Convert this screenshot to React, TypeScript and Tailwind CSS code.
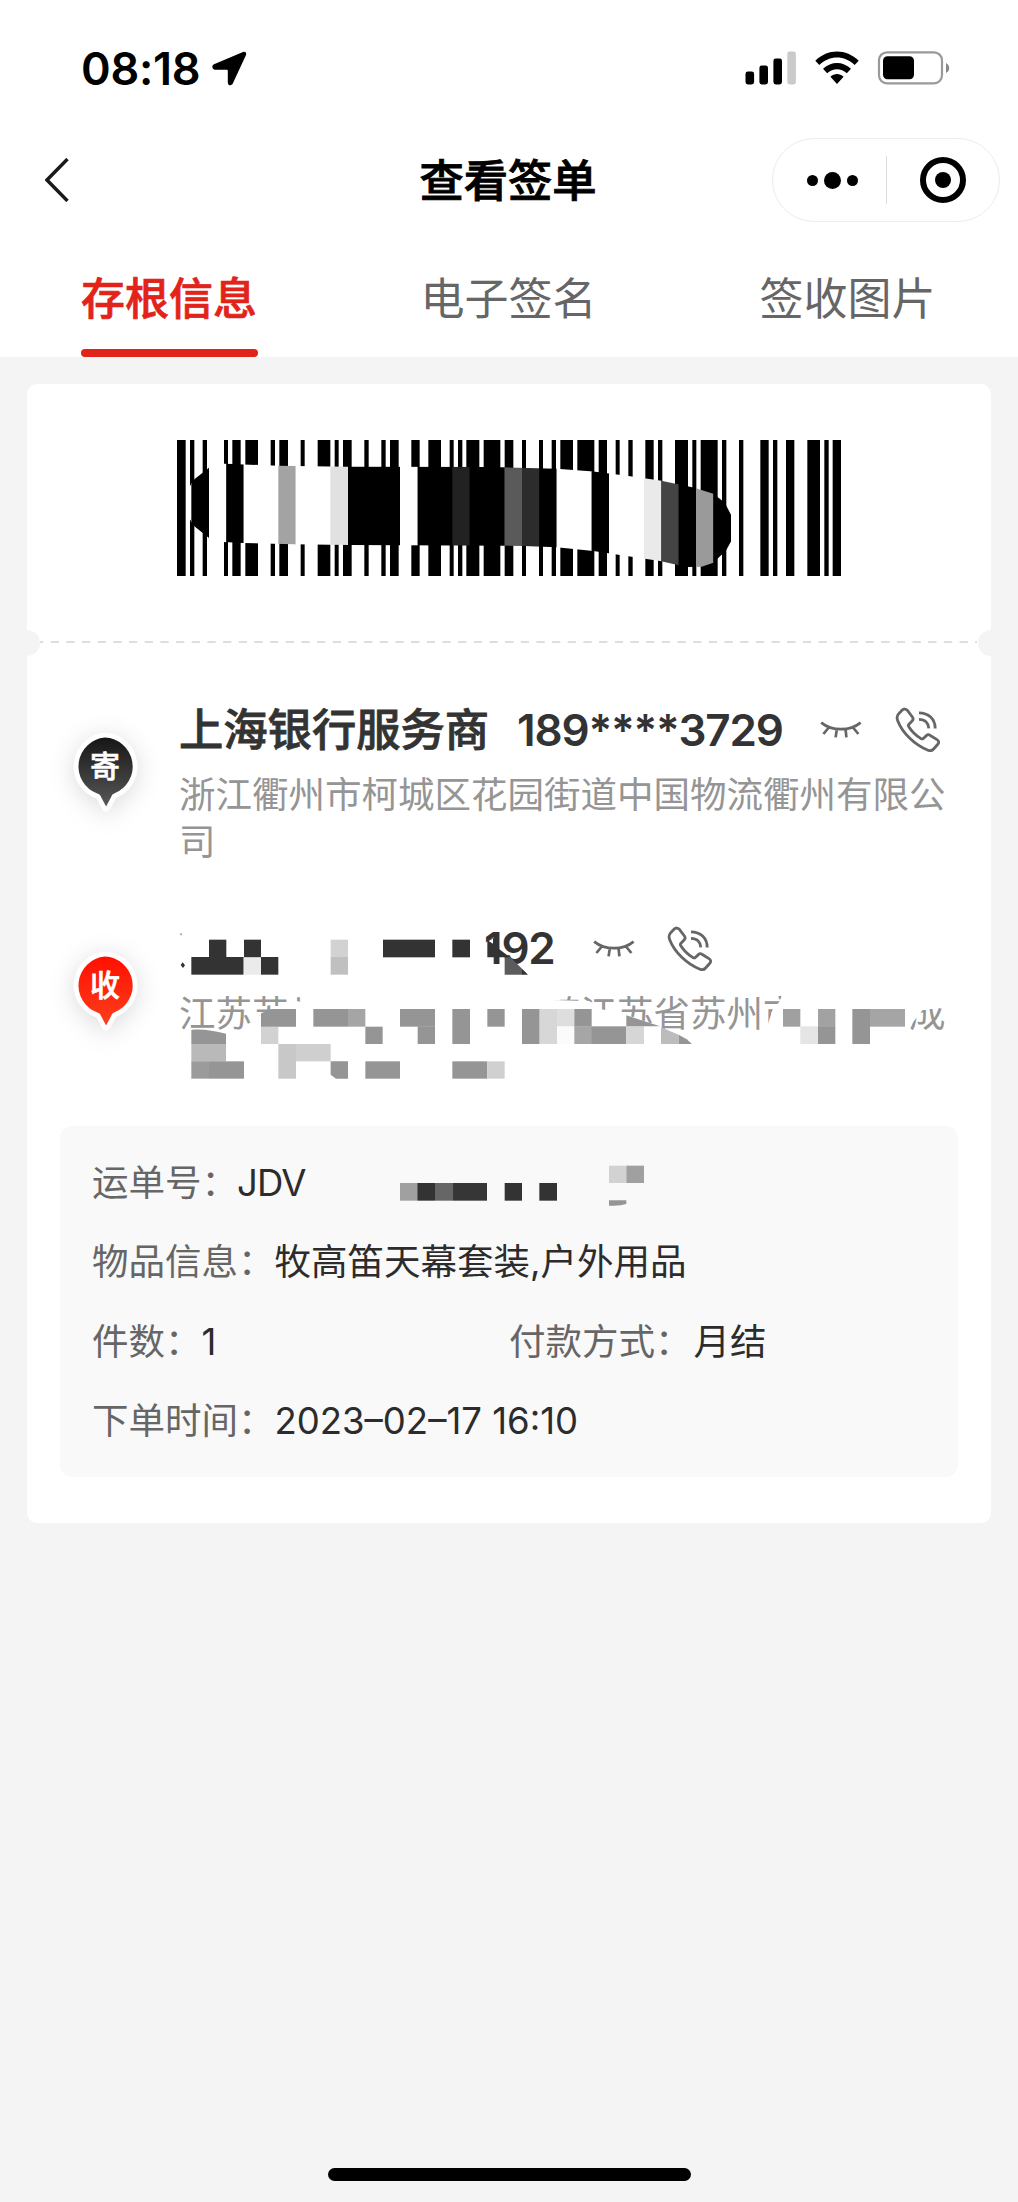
import type { ReactNode } from "react";

type Box = [number, number, number, number, string];

// Bars of the barcode as [start, end], in thirds of a pixel.
const BARS: [number, number][] = [
  [51, 77], [90, 103], [128, 141], [192, 204], [217, 242], [256, 294], [332, 345], [358, 384],
  [422, 434], [473, 511], [524, 536], [549, 575], [613, 626], [664, 677], [690, 716], [754, 779],
  [805, 843], [869, 881], [894, 907], [919, 958], [971, 1021], [1034, 1060], [1086, 1098],
  [1137, 1149], [1175, 1188], [1201, 1239], [1252, 1303], [1316, 1341], [1367, 1379], [1405, 1418],
  [1456, 1481], [1494, 1507], [1545, 1584], [1597, 1609], [1622, 1673], [1686, 1699], [1737, 1750],
  [1801, 1826], [1839, 1852], [1878, 1903], [1942, 1980], [1993, 2006], [2018, 2043],
];

const BLOCKS: [number, number, string][] = [
  [80, 147, "#000"], [147, 199, "#fff"], [199, 251, "#000"], [251, 355, "#fff"], [355, 407, "#a3a3a3"],
  [407, 512, "#fff"], [512, 564, "#e1e1e1"], [564, 720, "#000"], [720, 773, "#fff"], [773, 877, "#000"],
  [877, 929, "#222"], [929, 1034, "#000"], [1034, 1086, "#5a5a5a"], [1086, 1138, "#2c2c2c"],
  [1138, 1190, "#000"], [1190, 1295, "#fff"], [1295, 1347, "#000"], [1347, 1452, "#fff"],
  [1452, 1504, "#eaeaea"], [1504, 1556, "#444"], [1556, 1608, "#000"], [1608, 1660, "#9a9a9a"],
  [1660, 1713, "#000"],
];

function Barcode() {
  return (
    <svg width="664" height="136" viewBox="51 61 1992 407" preserveAspectRatio="none">
      <defs>
        <clipPath id="stroke">
          <path d="M88 202 L104 178 L147 144 L190 131 L250 134 L355 138 L560 141 L1000 142 L1190 147 L1300 155 L1400 168 L1500 182 L1600 203 L1660 222 L1685 241 L1698 256 L1713 285 V365 L1698 392 L1660 428 L1625 440 L1580 441 L1500 423 L1400 408 L1300 393 L1190 382 L1090 378 L570 375 L400 373 L250 369 L190 366 L147 354 L104 320 L88 296 Z" />
        </clipPath>
      </defs>
      {BARS.map(([a, b]) => (
        <rect key={a} x={a} y={61} width={b - a} height={407} />
      ))}
      <g clipPath="url(#stroke)">
        <rect x="80" y="100" width="16" height="360" fill="#fff" />
        {BLOCKS.map(([a, b, c]) => (
          <rect key={a} x={Math.max(a, 94)} y={100} width={b - Math.max(a, 94) + 0.5} height={360} fill={c} />
        ))}
      </g>
    </svg>
  );
}

function Eye() {
  return (
    <svg width="42" height="18" viewBox="0 0 42 18" fill="none" stroke="#666" strokeWidth="2.7">
      <path d="M1.2 1.6C12 10.4 30 10.4 40.6 1.6M8.4 7L3.4 13M16.8 8.6L15.6 16.4M25.6 8.6L26.4 16.4M33.4 7L38.4 13" />
    </svg>
  );
}

function Phone() {
  return (
    <svg width="46" height="46" viewBox="0 0 46 46" fill="none" stroke="#666" strokeWidth="2.8" strokeLinejoin="round">
      <path d="M7 3.2C8.6 1.6 11 1.6 12.4 3.4L17.4 10C18.4 11.4 18.3 12.8 17.1 14L14 17.2C13.2 18 13.2 18.8 13.8 19.8C17 25 21.2 28.8 26 31.6C27 32.2 27.8 32 28.6 31.2L31.4 28.6C32.4 27.6 33.7 27.4 34.9 28.2L42 32.6C43.9 33.8 44.2 35.6 42.8 37.3L38.6 42C37.2 43.7 35.2 44.1 33 43.2C20 38 7.6 26.4 2.6 13.4C1.8 11.2 2 8.8 3.4 7.2Z" />
      <path d="M24 5.8C33.4 5.8 40.2 12 40.2 21.4M24 12.4C29.8 12.4 33.4 16 33.8 21.4" />
    </svg>
  );
}

function Pin({ id, from, to, children }: { id: string; from: string; to: string; children: ReactNode }) {
  return (
    <div className="relative h-[80px] w-[68px]">
      <svg className="overflow-visible drop-shadow-[0_4px_12px_rgba(0,0,0,0.14)]" width="68" height="80" viewBox="0 0 68 80">
        <defs>
          <linearGradient id={id} x1="0" y1="0" x2="0" y2="1">
            <stop offset="0" stopColor={from} />
            <stop offset="1" stopColor={to} />
          </linearGradient>
        </defs>
        <path
          d="M33.8 5.5A29 29 0 0 1 43.2 61.5C41.7 62 41.2 62.8 40.4 64.4L35.1 74.6L29.8 64.4C29 62.8 28.2 62 26.2 61.5A29 29 0 0 1 33.8 5.5Z"
          fill={`url(#${id})`}
          stroke="#fff"
          strokeWidth="9.6"
          strokeLinejoin="round"
          paintOrder="stroke"
        />
      </svg>
      <span className="absolute left-0 top-[13px] w-[68px] text-center text-[30px] font-medium leading-[42px] text-white [-webkit-text-stroke:0.6px_white]">
        {children}
      </span>
    </div>
  );
}

const G = "#959595";
const D = "#333";
// Masking blocks over the receiver, in thirds of a pixel: x, y, width, height, colour.
const MASK: Box[] = [
  [627, 149, 52, 53, D], [732, 149, 51, 53, D], [574, 201, 157, 53, D], [783, 201, 52, 53, D],
  [731, 203, 52, 51, "#ebebeb"], [992, 149, 52, 53, "#d2d2d2"], [992, 201, 52, 53, "#c0c0c0"],
  [1149, 149, 156, 53, D], [1357, 149, 53, 53, D],
  [940, 357, 105, 53, G], [1044, 357, 52, 53, "#a5a5a5"], [783, 410, 52, 52, "#d2d2d2"],
  [1096, 410, 52, 52, G], [1200, 357, 105, 53, G], [1253, 409, 52, 53, G], [1357, 357, 53, 105, G],
  [1462, 357, 52, 53, G], [574, 462, 104, 53, "#b9b9b9"], [574, 514, 53, 52, "#9b9b9b"], [627, 514, 105, 52, G],
  [835, 462, 53, 104, "#c8c8c8"], [888, 462, 104, 52, "#cfcfcf"], [1096, 514, 104, 52, G],
  [1357, 514, 105, 52, G], [1462, 514, 52, 52, "#d0d0d0"],
  [1566, 357, 53, 105, G], [1619, 357, 52, 105, "#d7d7d7"], [1671, 357, 52, 53, "#dedede"],
  [1671, 409, 52, 53, "#fbfbfb"], [1723, 357, 52, 53, G], [1723, 409, 53, 53, "#a6a6a6"],
  [1775, 409, 104, 53, G], [1879, 409, 53, 53, "#d6d6d6"],
  [2349, 357, 52, 53, "#a0a0a0"], [2401, 409, 53, 53, "#e5e5e5"], [2454, 357, 52, 53, "#a2a2a2"],
  [2454, 409, 52, 53, G], [2557, 357, 53, 105, G], [2610, 357, 105, 53, "#a5a5a5"],
];

function ReceiverMask() {
  return (
    <svg className="absolute left-0 top-0" width="800" height="180" viewBox="516 90 2400 540">
      <path fill="#fff" d="M735 430L762 392L785 372L830 355L862 340L890 333L902 336L920 325L960 316V308H1660V330L1750 333L1768 333L1800 357L1866 370L1900 382L1975 408L1990 417L2060 425V460H735Z" />
      <path fill="#fff" d="M2300 425L2303 405L2320 352L2336 338L2350 308H2840V352L2768 360L2738 398L2724 425Z" />
      {MASK.map(([x, y, w, h, c]) => (
        <rect key={`${x}-${y}`} x={x} y={y} width={w} height={h} fill={c} />
      ))}
      <path fill={G} d="M783 410V370L815 357H888V410ZM574 462V420C606 416 640 423 678 431V462ZM992 514H1044V566H1008L992 554Z" />
      <path fill={G} d="M1879 376L1980 409H1879Z" />
      <path fill="#bcbcbc" d="M1983 412L2036 434V462H1983Z" />
      <path fill={G} d="M2036 434L2060 448L2076 462H2036Z" />
      <path fill={D} d="M1462 152L1490 140V172L1530 202H1462ZM542 225L548 217L555 226L549 234ZM541 132L544 128V137Z" />
      <path fill="#fff" d="M1466 153L1479 146V161Z" />
      <path fill="#5c5c5c" d="M1514 203L1530 201L1566 236V254H1514Z" />
      <path fill={D} d="M1566 236L1584 254H1566Z" />
    </svg>
  );
}

function Row({ label, children }: { label: string; children: ReactNode }) {
  return (
    <div className="flex h-[79.2px] items-center whitespace-nowrap">
      <span className="text-[#666]">{label}：</span>
      <span className="text-[#2c2c2c]">{children}</span>
    </div>
  );
}

export default function App() {
  return (
    <div className="flex h-[2202px] w-[1018px] flex-col overflow-hidden bg-[#f4f4f4] font-['Inter','Noto_Sans_CJK_SC',sans-serif]">
      <header className="h-[357px] bg-white">
        <div className="flex h-[136px] items-center pl-[81px] pr-[68px]">
          <span className="text-[45px] font-semibold leading-none tracking-[-0.3px] text-black">08:18</span>
          <svg className="ml-[12px]" width="35" height="35" viewBox="0 0 35 35">
            <path d="M31 1L2 13.2C-.6 14.4 0 18.6 3 18.8H14.6C15.4 18.8 15.8 19.2 15.8 20V31.4C16 34.8 19.4 35.2 20.8 32.6L34 4C34.8 2 33.2 .2 31 1Z" />
          </svg>
          <div className="ml-auto flex items-center">
            <svg width="51" height="34" viewBox="0 0 51 34">
              <rect x="0.5" y="20.5" width="8.6" height="13" rx="2.4" />
              <rect x="14.4" y="14.5" width="8.6" height="19" rx="2.4" />
              <rect x="28.4" y="7.5" width="8.6" height="26" rx="2.4" />
              <rect x="42.3" y="0.5" width="8.6" height="33" rx="2.4" fill="#cacaca" />
            </svg>
            <svg className="ml-[19px]" width="44" height="34" viewBox="0 0 44 34">
              <path d="M0.3 9.8C12.7-2.6 31.3-2.6 43.7 9.8L39.7 14C29.6 4 14.4 4 4.3 14ZM8 17.8C16.4 10 27.6 10 36 17.8L31.8 22.2C26 17 18 17 12.2 22.2ZM15.4 25.8C19.4 22.2 24.6 22.2 28.6 25.8L22 33Z" />
            </svg>
            <svg className="ml-[18px]" width="73" height="34" viewBox="0 0 73 34">
              <rect x="2" y="1.3" width="63" height="31" rx="8" fill="none" stroke="#999" strokeWidth="2.2" />
              <rect x="6" y="5.3" width="31" height="23" rx="4.5" />
              <path d="M69 12C73.3 14 73.3 20 69 22Z" fill="#888" />
            </svg>
          </div>
        </div>
        <div className="grid h-[88px] grid-cols-[1fr_auto_1fr] items-center pl-[45px] pr-[18px]">
          <svg width="24" height="44" viewBox="0 0 24 44" fill="none" stroke="#1a1a1a" strokeWidth="3.4">
            <path d="M22.5 1L2 22L22.5 43" />
          </svg>
          <h1 className="translate-x-[-14.5px] translate-y-[1px] text-[44.3px] font-medium leading-none text-black [-webkit-text-stroke:0.9px_black]">查看签单</h1>
          <div className="flex h-[84px] w-[228px] items-center justify-self-end rounded-full border border-[#ececec]">
            <div className="flex w-[113px] items-center justify-center gap-[6px] pl-[6px]">
              <i className="size-[11px] rounded-full bg-black" />
              <i className="size-[17px] rounded-full bg-black" />
              <i className="size-[11px] rounded-full bg-black" />
            </div>
            <div className="h-[48px] w-px bg-[#dcdcdc]" />
            <div className="ml-[33px] flex size-[46px] items-center justify-center rounded-full border-[6px] border-black">
              <i className="size-[16px] rounded-full bg-black" />
            </div>
          </div>
        </div>
        <nav className="grid h-[133px] grid-cols-[338px_341px_339px] text-center text-[44px] leading-[150px] text-[#666]">
          <div className="flex flex-col items-center">
            <span className="h-[125px] font-medium text-[#e2231a] [-webkit-text-stroke:0.7px_#e2231a]">存根信息</span>
            <span className="h-[8px] w-[177px] rounded-full bg-[#e2231a]" />
          </div>
          <span>电子签名</span>
          <span className="translate-x-[-1px]">签收图片</span>
        </nav>
      </header>

      <main className="mx-[27px] mt-[27px] flex h-[1139px] flex-col rounded-[10px] bg-white">
        <section className="relative flex h-[258px] justify-center pt-[56px]">
          <Barcode />
          <i className="absolute bottom-[-14px] left-[-13px] size-[26px] rounded-full bg-[#f4f4f4]" />
          <i className="absolute bottom-[-14px] right-[-13px] size-[26px] rounded-full bg-[#f4f4f4]" />
        </section>
        <svg className="mx-[13px] -mt-px mb-px" width="937" height="2" viewBox="0 0 937 2">
          <path d="M0 1H937" stroke="#dedede" strokeWidth="2" strokeDasharray="8.3 7.37" strokeDashoffset="5" />
        </svg>

        <section className="flex h-[219px] pl-[44px]">
          <div className="w-[108px] pt-[88px]">
            <Pin id="send" from="#161616" to="#585858">寄</Pin>
          </div>
          <div className="pt-[54px]">
            <div className="flex h-[64px] items-center text-[44.3px] font-medium text-[#333]">
              <span className="whitespace-nowrap [-webkit-text-stroke:0.8px_#333]">上海银行服务商</span>
              <span className="ml-[28px] w-[266px] whitespace-nowrap text-[44px] font-semibold tracking-[-1.2px]">189****3729</span>
              <span className="ml-[37px] flex"><Eye /></span>
              <span className="ml-[33px] flex"><Phone /></span>
            </div>
            <p className="mt-[10px] w-[770px] text-[36.5px] leading-[47px] text-[#959595]">
              浙江衢州市柯城区花园街道中国物流衢州有限公司
            </p>
          </div>
        </section>

        <section className="flex h-[263px] pl-[44px]">
          <div className="w-[108px] pt-[88px]">
            <Pin id="receive" from="#ff0f00" to="#fb3f1c">收</Pin>
          </div>
          <div className="relative pt-[54px]">
            <div className="flex h-[64px] items-center text-[44px] font-semibold text-[#333]">
              <span className="ml-[305px] w-[70px] -translate-y-px whitespace-nowrap tracking-[-1.2px]">192</span>
              <span className="ml-[39px] flex"><Eye /></span>
              <span className="ml-[32px] flex"><Phone /></span>
            </div>
            <p className="mt-[10px] whitespace-pre text-[36.5px] leading-[47px] text-[#959595]">
              江苏苏州　　　　　　镇江苏省苏州市　　　成
            </p>
            <div className="absolute left-[-7px] top-[57px]"><ReceiverMask /></div>
          </div>
        </section>

        <section className="relative mx-[33px] h-[351px] rounded-[12px] bg-[#f9f9f9] px-[32px] pt-[18px] text-[36.5px]">
          <Row label="运单号"><span className="-ml-px tracking-[-0.8px]">JDV</span></Row>
          <Row label="物品信息">牧高笛天幕套装,户外用品</Row>
          <div className="grid grid-cols-[417px_1fr]">
            <Row label="件数">1</Row>
            <Row label="付款方式"><span className="ml-[2px]">月结</span></Row>
          </div>
          <Row label="下单时间">2023–02–17 16:10</Row>
          <svg className="absolute left-[340px] top-[39px]" width="250" height="42" viewBox="0 0 750 126">
            <rect x="0" y="54" width="52" height="53" fill="#a0a0a0" />
            <rect x="52" y="54" width="53" height="53" fill="#333" />
            <rect x="105" y="54" width="52" height="53" fill="#666" />
            <rect x="157" y="54" width="104" height="53" fill="#363636" />
            <rect x="314" y="54" width="52" height="53" fill="#333" />
            <rect x="418" y="54" width="53" height="53" fill="#333" />
            <rect x="627" y="2" width="52" height="52" fill="#d2d2d2" />
            <rect x="679" y="2" width="53" height="52" fill="#a0a0a0" />
            <path d="M627 106H679V117Q660 124 627 122Z" fill="#959595" />
          </svg>
        </section>
      </main>

      <div className="mb-[21px] mt-auto h-[13px] w-[363px] self-center rounded-full bg-black" />
    </div>
  );
}
